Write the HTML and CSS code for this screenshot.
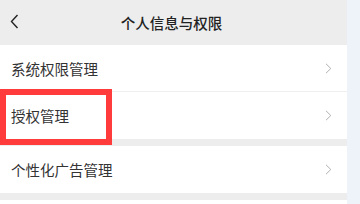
FILE: index.html
```html
<!DOCTYPE html>
<html lang="zh-CN">
<head>
    <meta charset="UTF-8">
    <meta name="viewport" content="width=device-width, initial-scale=1.0">
    <title>个人信息与权限</title>
    <link rel="stylesheet" href="styles.css">
</head>
<body>
    <div class="screen">
        <div class="phone">
            <div class="top-bar">
                <span class="back">
                    <svg width="9" height="15" viewBox="0 0 9 15"><path d="M7.5 1 L1.5 7.5 L7.5 14" fill="none" stroke="#222" stroke-width="1.4"/></svg>
                </span>
                <h1>个人信息与权限</h1>
            </div>
            <ul class="menu">
                <li class="item">
                    <span>系统权限管理</span>
                    <svg class="arrow" width="7" height="11" viewBox="0 0 7 11"><path d="M1 0.8 L5.8 5.5 L1 10.2" fill="none" stroke="#b0b0b0" stroke-width="1"/></svg>
                </li>
                <li class="item last">
                    <span>授权管理</span>
                    <svg class="arrow" width="7" height="11" viewBox="0 0 7 11"><path d="M1 0.8 L5.8 5.5 L1 10.2" fill="none" stroke="#b0b0b0" stroke-width="1"/></svg>
                </li>
            </ul>
            <ul class="menu">
                <li class="item last">
                    <span>个性化广告管理</span>
                    <svg class="arrow" width="7" height="11" viewBox="0 0 7 11"><path d="M1 0.8 L5.8 5.5 L1 10.2" fill="none" stroke="#b0b0b0" stroke-width="1"/></svg>
                </li>
            </ul>
            <div class="rest"></div>
            <!-- 标注框 -->
            <div class="highlight"></div>
        </div>
        <div class="side"></div>
    </div>
</body>
</html>
```

FILE: styles.css
```css
body {
    margin: 0;
    padding: 0;
    font-family: "Noto Sans CJK SC", "Noto Sans", sans-serif;
    color: #333333;
    background: #ffffff;
    overflow: hidden;
}

.screen {
    display: flex;
    width: 360px;
    height: 204px;
}

.phone {
    position: relative;
    width: 347px;
    background: #ededed;
}

.side {
    flex: 1;
    background: #eef2f9;
}

.top-bar {
    height: 45px;
    display: flex;
    align-items: center;
    justify-content: center;
    position: relative;
    background: #ededed;
}

.top-bar h1 {
    margin: 0;
    font-size: 14.5px;
    font-weight: 500;
    color: #222222;
    letter-spacing: 0;
    margin-left: -4px;
}

.back {
    position: absolute;
    left: 10px;
    top: 10px;
}

.menu {
    list-style: none;
    margin: 0 0 7px 0;
    padding: 0;
    background: #ffffff;
}

.item {
    height: 46px;
    display: flex;
    align-items: center;
    justify-content: space-between;
    padding: 0 15px 0 11px;
    font-size: 14.5px;
    border-bottom: 1px solid #efefef;
}

.item.last {
    border-bottom: none;
    height: 47px;
}

.arrow {
    display: block;
}

.rest {
    height: 10px;
    background: #ffffff;
}

.highlight {
    position: absolute;
    left: 0;
    top: 89px;
    width: 100px;
    height: 44px;
    border: 6px solid #ff3b3b;
}
```
